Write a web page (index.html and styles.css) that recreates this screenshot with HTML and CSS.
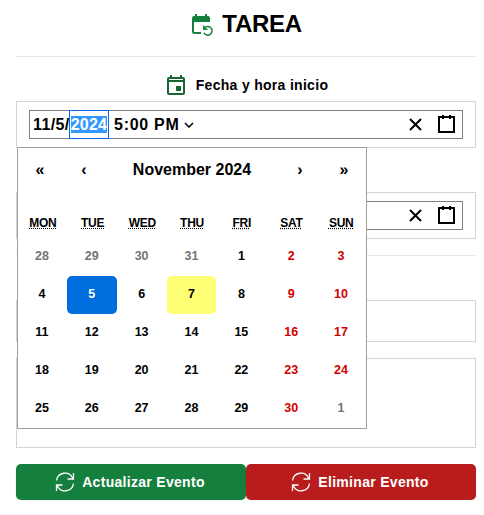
FILE: index.html
```html
<!DOCTYPE html>
<html lang="es">
<head>
<meta charset="utf-8">
<title>Tarea</title>
<link rel="stylesheet" href="styles.css">
</head>
<body>
<main class="form">
  <h1 class="title">
    <svg class="title-icon" viewBox="0 0 24 24"><path class="solid" d="M4 4h1V2h2v2h8V2h2v2h1a2 2 0 0 1 2 2v4H2V6a2 2 0 0 1 2-2z"/><path d="M3 9v10.500a1.500 1.500 0 0 0 1.500 1.500H11"/><path class="thin" d="M14.200 16.500a4.300 4.300 0 1 1-.3 4.200M13.800 13.500v3.700h3.700"/></svg>
    <span>TAREA</span>
  </h1>
  <hr class="rule">
  <div class="label">
    <svg class="label-icon" viewBox="0 0 24 24" fill="currentColor"><path d="M17 12h-5v5h5v-5zM16 1v2H8V1H6v2H5c-1.110 0-1.990.9-1.990 2L3 19c0 1.100.890 2 2 2h14c1.100 0 2-.9 2-2V5c0-1.100-.9-2-2-2h-1V1h-2zm3 18H5V8h14v11zM5 6V5h14v1z"/></svg>
    <span>Fecha y hora inicio</span>
  </div>
  <div class="field field-start">
    <div class="picker">
      <div class="inputs"><span class="date">11/5/</span><span class="year"><mark>2024</mark></span><span class="time">5:00 PM</span><svg class="chevron" viewBox="0 0 10 6"><path d="M1 1l4 4 4-4"/></svg></div>
      <svg class="picker-icon" viewBox="0 0 19 19"><path d="M4 4l11 11M15 4L4 15"/></svg>
      <svg class="picker-icon" viewBox="0 0 19 19"><path d="M2 2h15v15H2zM6 0v4M13 0v4"/></svg>
    </div>
    <div class="calendar">
      <div class="nav"><span>«</span><span>‹</span><span class="month">November 2024</span><span>›</span><span>»</span></div>
      <div class="weekdays"><span><abbr>MON</abbr></span><span><abbr>TUE</abbr></span><span><abbr>WED</abbr></span><span><abbr>THU</abbr></span><span><abbr>FRI</abbr></span><span><abbr>SAT</abbr></span><span><abbr>SUN</abbr></span></div>
      <div class="days">
        <span class="out">28</span><span class="out">29</span><span class="out">30</span><span class="out">31</span><span>1</span><span class="weekend">2</span><span class="weekend">3</span>
        <span>4</span><span class="active">5</span><span>6</span><span class="today">7</span><span>8</span><span class="weekend">9</span><span class="weekend">10</span>
        <span>11</span><span>12</span><span>13</span><span>14</span><span>15</span><span class="weekend">16</span><span class="weekend">17</span>
        <span>18</span><span>19</span><span>20</span><span>21</span><span>22</span><span class="weekend">23</span><span class="weekend">24</span>
        <span>25</span><span>26</span><span>27</span><span>28</span><span>29</span><span class="weekend">30</span><span class="out">1</span>
      </div>
    </div>
  </div>
  <div class="field field-end">
    <div class="picker">
      <div class="inputs"></div>
      <svg class="picker-icon" viewBox="0 0 19 19"><path d="M4 4l11 11M15 4L4 15"/></svg>
      <svg class="picker-icon" viewBox="0 0 19 19"><path d="M2 2h15v15H2zM6 0v4M13 0v4"/></svg>
    </div>
  </div>
  <hr class="rule">
  <div class="field name"></div>
  <div class="field notes"></div>
  <div class="actions">
    <button class="btn update"><svg class="sync" viewBox="0 0 20 20"><path d="M1.500 8.500A8.500 8.500 0 0 1 17.800 6.500M18.500 1v6h-6M18.500 11.500A8.500 8.500 0 0 1 2.200 13.500M1.500 19v-6h6"/></svg><span>Actualizar Evento</span></button>
    <button class="btn delete"><svg class="sync" viewBox="0 0 20 20"><path d="M1.500 8.500A8.500 8.500 0 0 1 17.800 6.500M18.500 1v6h-6M18.500 11.500A8.500 8.500 0 0 1 2.200 13.500M1.500 19v-6h6"/></svg><span>Eliminar Evento</span></button>
  </div>
</main>
</body>
</html>
```

FILE: styles.css
```css
* { box-sizing: border-box; }
body {
  margin: 0;
  background: #fff;
  color: #000;
  font-family: "Liberation Sans", Arial, sans-serif;
  font-weight: 700;
}
.form { display: flex; flex-direction: column; padding: 8px 8px 0 16px; width: 484px; }
.title {
  display: flex;
  align-items: center;
  justify-content: center;
  gap: 8px;
  height: 32px;
  margin: 0 0 16px;
  font-size: 24px;
  letter-spacing: -.3px;
}
.title-icon { width: 24px; height: 24px; color: #15803d; fill: none; stroke: currentColor; stroke-width: 2; }
.title-icon .solid { fill: currentColor; stroke: none; }
.title-icon .thin { stroke-width: 1.500; }
.rule { width: 460px; height: 1px; margin: 0; border: 0; background: #e5e7eb; }
.label {
  display: flex;
  align-items: center;
  justify-content: center;
  gap: 8px;
  height: 24px;
  margin: 16px 0 4px;
  font-size: 14px;
  letter-spacing: .3px;
}
.label-icon { width: 24px; height: 24px; margin-top: 2px; color: #166534; }
.field { position: relative; width: 460px; border: 1px solid #d1d5db; }
.field-start, .field-end { height: 47px; padding: 8px 12px; }
.field-end { margin: 44px 0 16px; }
.picker { display: flex; align-items: center; height: 29px; border: 1px solid #808080; padding-right: 6px; }
.inputs { display: flex; flex: 1; align-items: center; height: 27px; padding-left: 3px; font-size: 16px; }
.date { letter-spacing: .4px; }
.year { display: flex; align-items: center; height: 29px; margin-left: -1px; padding: 0 1px; border: 1px solid #0a66e0; }
.year mark { height: 17px; line-height: 17px; background: #3399ff; color: #fff; letter-spacing: .2px; }
.time { margin-left: 5px; letter-spacing: .7px; }
.chevron { width: 10px; height: 6px; margin-left: 5px; fill: none; stroke: #000; stroke-width: 1.500; }
.picker-icon { width: 19px; height: 19px; margin-left: 12px; fill: none; stroke: #000; stroke-width: 2; }
.calendar {
  position: absolute;
  z-index: 2;
  left: 0;
  top: 45px;
  width: 350px;
  height: 282px;
  border: 1px solid #a0a096;
  background: #fff;
}
.nav { display: flex; height: 44px; margin-bottom: 16px; align-items: center; font-size: 16px; text-align: center; }
.nav span { width: 44px; }
.nav .month { flex: 1; }
.weekdays, .days { display: grid; grid-template-columns: repeat(7, 1fr); text-align: center; }
.weekdays { height: 30px; line-height: 30px; font-size: 12px; letter-spacing: -.3px; }
.weekdays abbr { text-decoration: underline dotted; }
.days { grid-auto-rows: 38px; line-height: 37px; margin-left: -1px; font-size: 12.500px; }
.out { color: #757575; }
.weekend { color: #d10000; }
.active, .today { border-radius: 5px; }
.active { background: #006edc; color: #fff; }
.today { background: #ffff76; }
.name { height: 42px; margin-top: 44px; }
.notes { height: 90px; margin: 16px 0; }
.actions { display: flex; width: 460px; }
.btn {
  display: flex;
  flex: 1;
  align-items: center;
  justify-content: center;
  gap: 7px;
  height: 36px;
  padding: 0 2px 0 0;
  border: 0;
  border-radius: 5px;
  color: #fff;
  font: inherit;
  font-size: 14px;
  letter-spacing: .3px;
  box-shadow: 0 1px 2px rgba(0, 0, 0, .12);
}
.update { background: #15803d; }
.delete { background: #b91c1c; }
.sync { width: 20px; height: 20px; fill: none; stroke: currentColor; stroke-width: 1.300; }
```
